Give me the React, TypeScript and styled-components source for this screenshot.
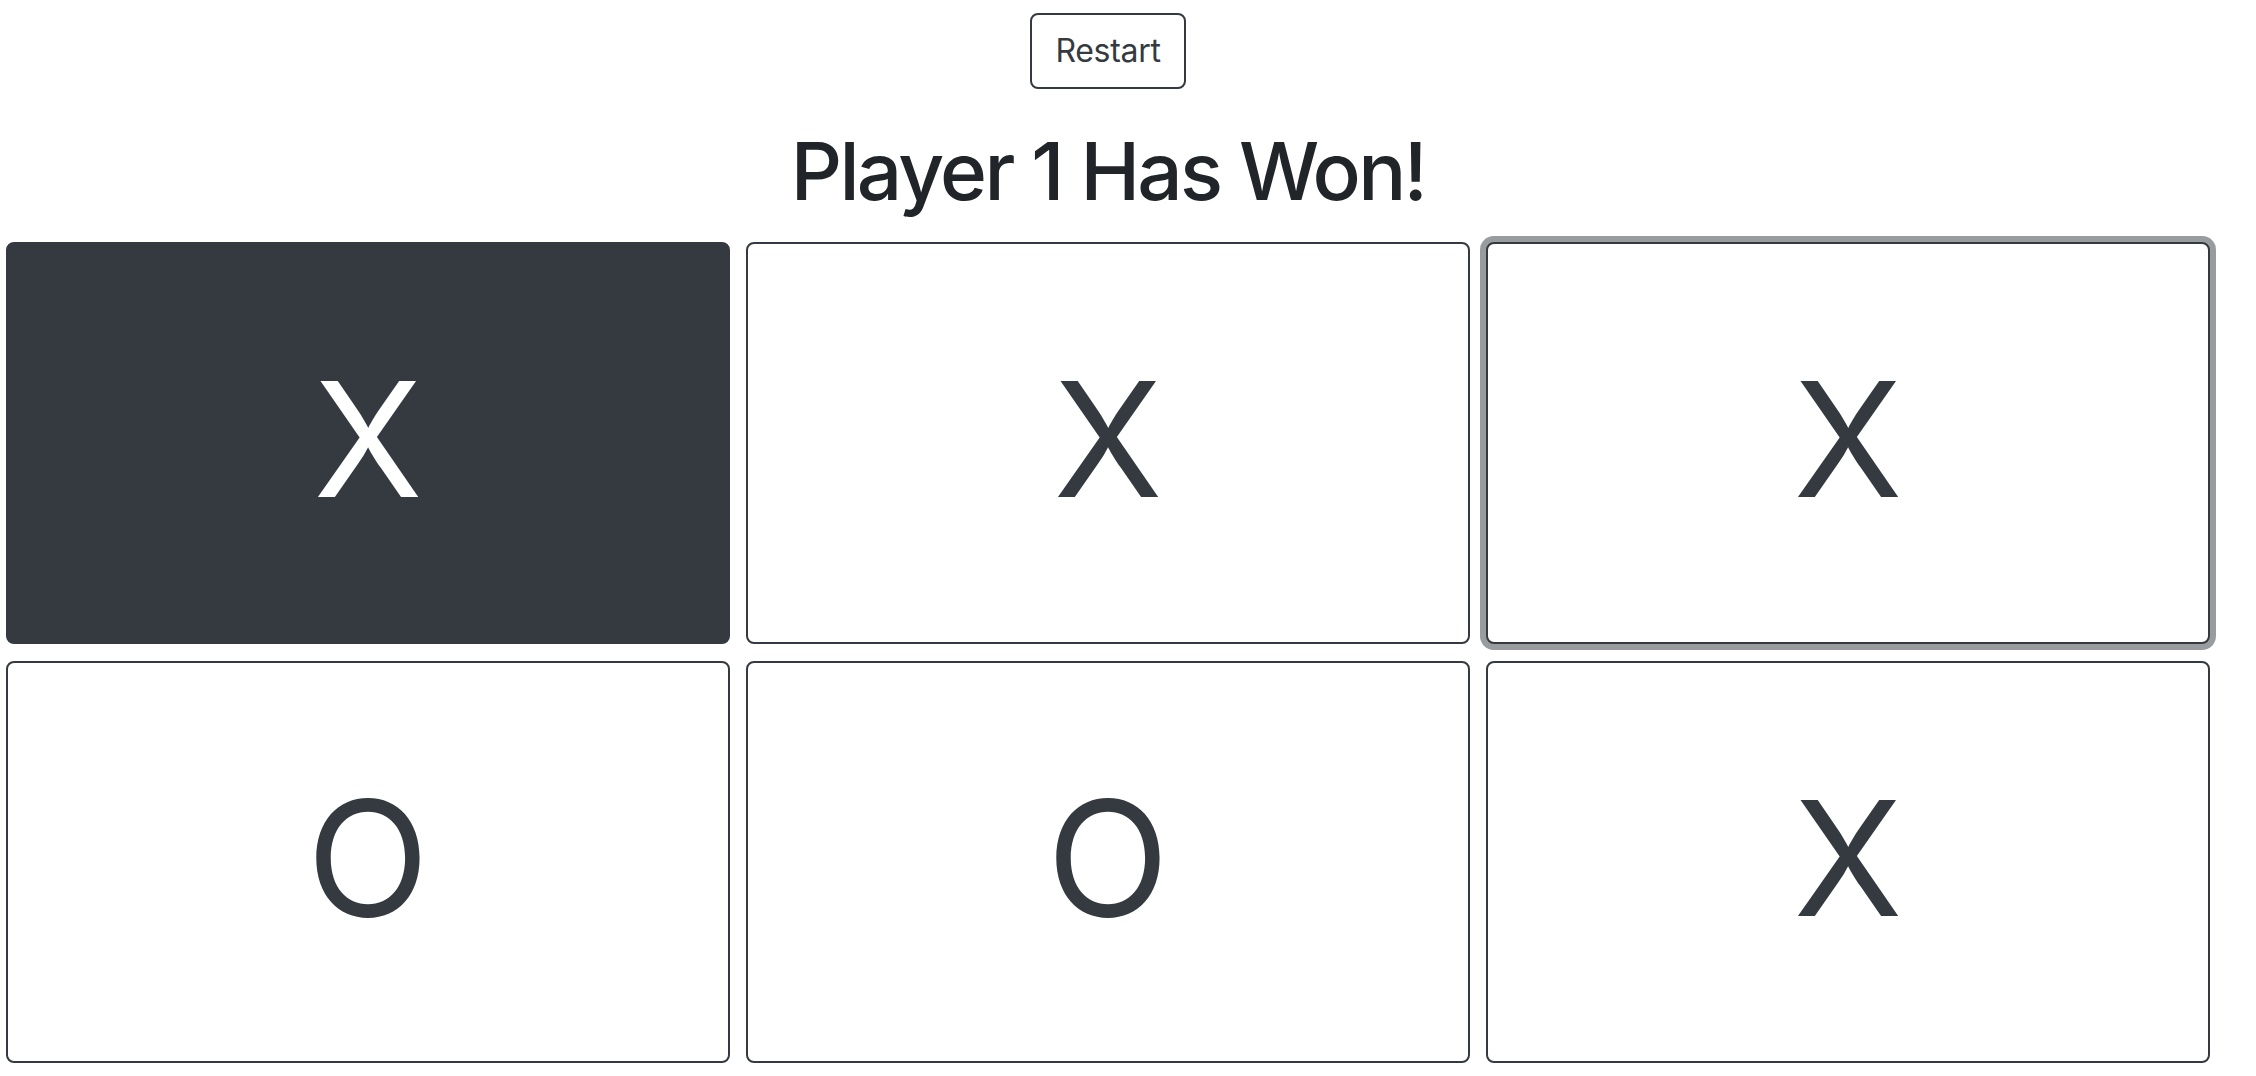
import styled, { createGlobalStyle, css } from "styled-components";

const GlobalStyle = createGlobalStyle`
  html, body {
    margin: 0;
    padding: 0;
    background: #ffffff;
    font-family: Inter, "Liberation Sans", sans-serif;
    color: #212529;
  }
`;

const Page = styled.div`
  display: flex;
  flex-direction: column;
  align-items: center;
  width: 2216px;
  padding-top: 13px;
`;

const RestartButton = styled.button`
  font-family: Inter, "Liberation Sans", sans-serif;
  font-size: 32px;
  line-height: 48px;
  padding: 12px 23px;
  color: #343a40;
  background: transparent;
  border: 2px solid #343a40;
  border-radius: 8px;
  letter-spacing: -0.3px;
  cursor: pointer;
`;

const Title = styled.h1`
  margin: 34px 0 23px;
  font-size: 80px;
  font-weight: 500;
  line-height: 96px;
  color: #212529;
  letter-spacing: -2.7px;
`;

const Board = styled.div`
  display: grid;
  grid-template-columns: repeat(3, 724px);
  grid-auto-rows: 402px;
  column-gap: 16px;
  row-gap: 17px;
  padding: 0 6px;
`;

const Cell = styled.button<{ $win?: boolean; $focus?: boolean }>`
  display: flex;
  align-items: center;
  justify-content: center;
  padding: 0 0 8px;
  font-family: Inter, "Liberation Sans", sans-serif;
  font-size: 160px;
  font-weight: 400;
  line-height: 1;
  color: #343a40;
  background: #ffffff;
  border: 2px solid #343a40;
  border-radius: 8px;
  ${(p) =>
    p.$win &&
    css`
      background: #343a40;
      color: #ffffff;
    `}
  ${(p) =>
    p.$focus &&
    css`
      box-shadow: 0 0 0 6px rgba(52, 58, 64, 0.5);
    `}
`;

const cells = [
  { mark: "X", win: true },
  { mark: "X" },
  { mark: "X", focus: true },
  { mark: "O" },
  { mark: "O" },
  { mark: "X" },
];

export default function App() {
  return (
    <>
      <GlobalStyle />
      <Page>
        <RestartButton>Restart</RestartButton>
        <Title>Player 1 Has Won!</Title>
        <Board>
          {cells.map((c, i) => (
            <Cell key={i} $win={c.win} $focus={c.focus}>
              {c.mark}
            </Cell>
          ))}
        </Board>
      </Page>
    </>
  );
}
